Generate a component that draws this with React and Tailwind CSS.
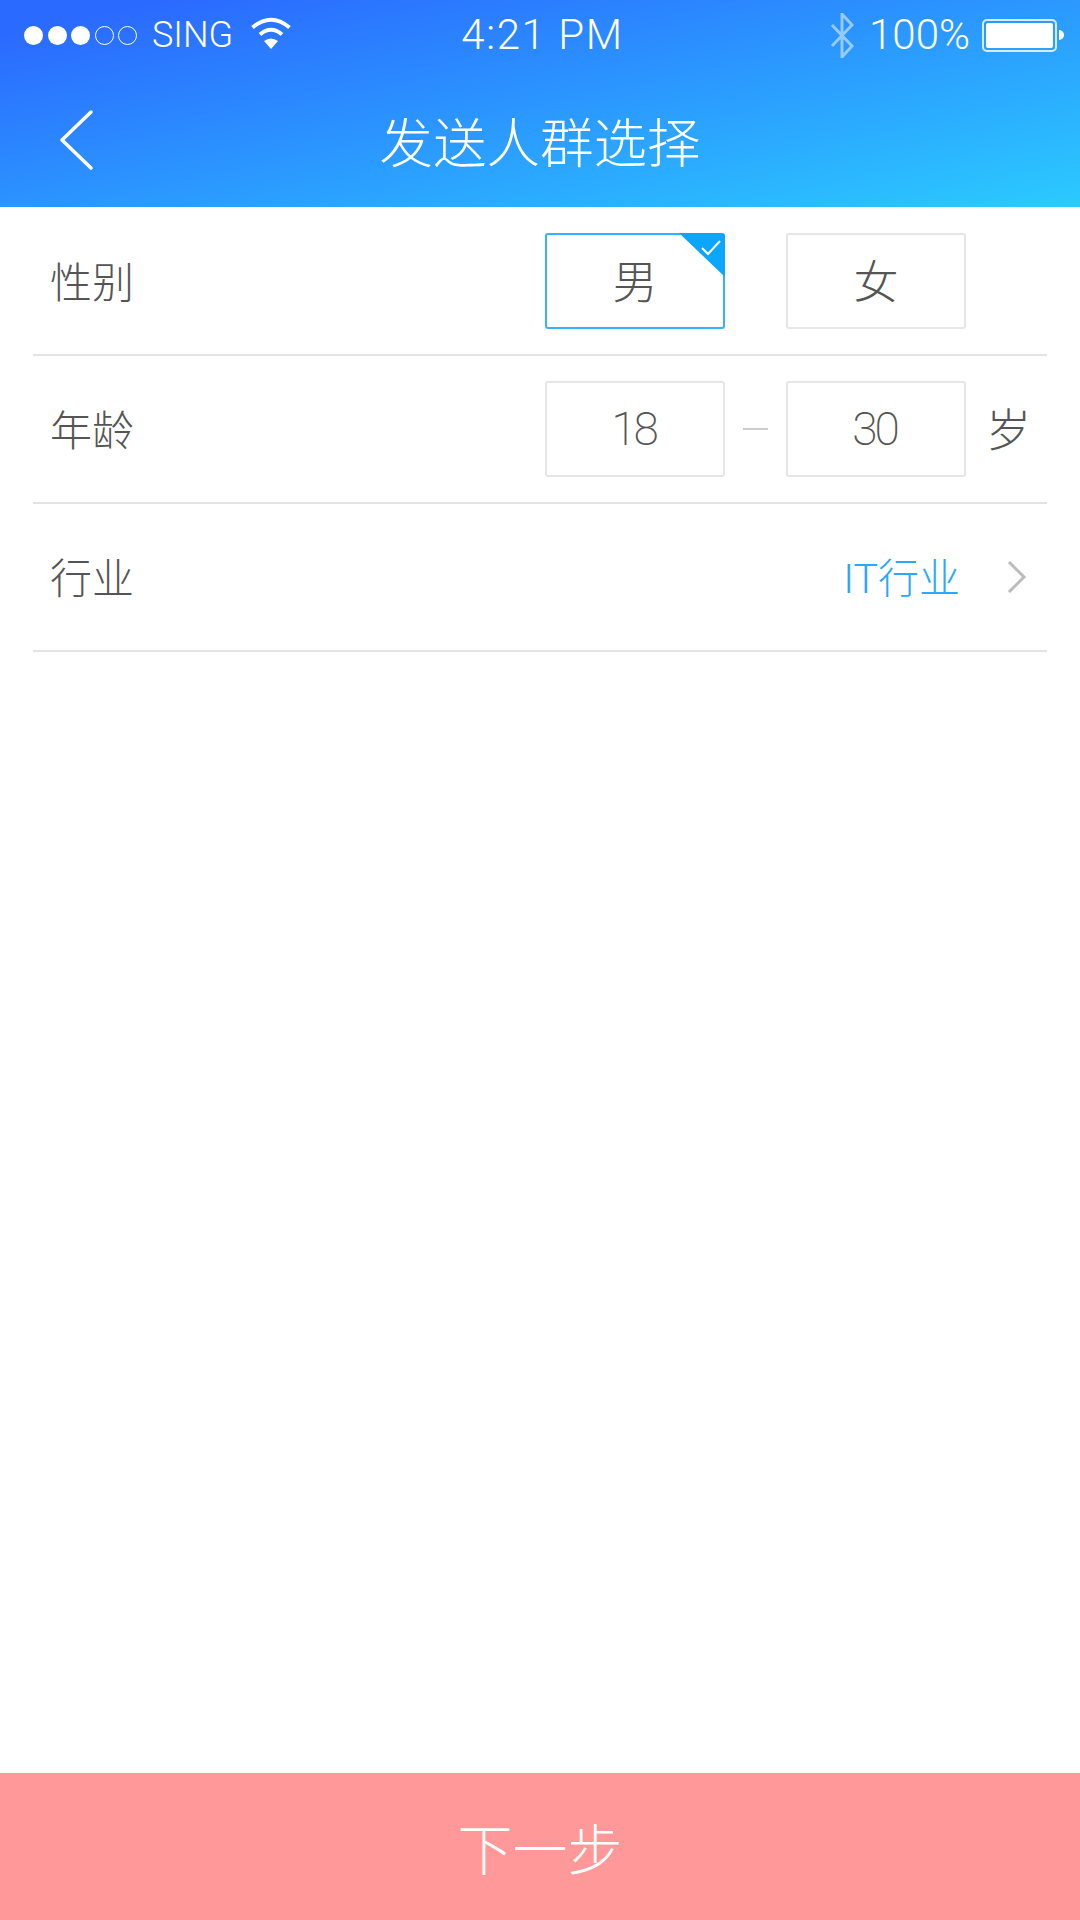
import React from "react";

const cjk = "font-['Noto_Sans_CJK_SC',sans-serif]";
const latin = "font-['Roboto','Noto_Sans_CJK_SC',sans-serif]";

const StatusBar = () => (
  <div className="flex h-[70px] items-center text-white">
    <div className="flex flex-1 items-center pl-[24px]">
      <div className="flex items-center gap-[4.5px]">
        <span className="h-[19px] w-[19px] rounded-full bg-white" />
        <span className="h-[19px] w-[19px] rounded-full bg-white" />
        <span className="h-[19px] w-[19px] rounded-full bg-white" />
        <span className="h-[19px] w-[19px] rounded-full border border-white" />
        <span className="h-[19px] w-[19px] rounded-full border border-white" />
      </div>
      <span className={`${latin} ml-[15px] text-[36px] font-light leading-none`}>SING</span>
      <svg className="mb-[3px] ml-[18px]" width="40" height="33" viewBox="0 0 40 33" fill="none">
        <path d="M1.5 10.5Q20 -5 38.5 10.5" stroke="white" strokeWidth="4" />
        <path d="M9 17.5Q20 8 31 17.5" stroke="white" strokeWidth="4" />
        <path d="M13 24Q20 19 27 24L20 32Z" fill="white" />
      </svg>
    </div>
    <span className={`${latin} pr-[3px] text-[42px] font-light leading-none tracking-[1.6px]`}>4:21 PM</span>
    <div className="flex flex-1 items-center justify-end pr-[16px]">
      <svg className="opacity-50" width="24" height="45" viewBox="0 0 24 45" fill="none">
        <path d="M2 12L22 33L12 44V1L22 12L2 33" stroke="white" strokeWidth="3" />
      </svg>
      <span className={`${latin} ml-[15px] text-[42px] font-light leading-none`}>100%</span>
      <div className="ml-[12px] h-[33px] w-[75px] rounded-[5px] border-2 border-white/80 p-[2px]">
        <div className="h-full w-full rounded-[2px] bg-white" />
      </div>
      <div className="ml-[2px] h-[10px] w-[5px] rounded-r-full bg-white" />
    </div>
  </div>
);

const NavBar = () => (
  <div className="grid h-[137px] grid-cols-[1fr_auto_1fr] items-center pt-[3px] text-white">
    <svg className="ml-[58px]" width="36" height="62" viewBox="0 0 36 62" fill="none">
      <path d="M33 3L4 31L33 59" stroke="white" strokeWidth="3.5" strokeLinecap="round" strokeLinejoin="round" />
    </svg>
    <h1 className={`${cjk} text-[53.5px] font-light leading-none`}>发送人群选择</h1>
    <div />
  </div>
);

const Box = ({ children, selected }) => (
  <div
    className={`relative flex h-[96px] w-[180px] items-center justify-center rounded-[3px] border-2 text-[#555] ${
      selected ? "border-[#36b0ff]" : "border-[#e6e6e6]"
    }`}
  >
    {children}
    {selected && (
      <svg className="absolute -right-[2px] -top-[2px]" width="46" height="44" viewBox="0 0 46 44">
        <path d="M0 0H42Q46 0 46 4V44Z" fill="#0ba6ff" />
        <path d="M23 15L29 21L41 8" fill="none" stroke="white" strokeWidth="2" />
      </svg>
    )}
  </div>
);

const Row = ({ label, children }) => (
  <div className="flex h-[148px] items-center border-b-2 border-[#e3e3e3]">
    <span className={`${cjk} w-[512px] pb-[3px] pl-[17px] text-[42px] font-light leading-none text-[#555]`}>{label}</span>
    {children}
  </div>
);

const App = () => {
  return (
    <div className="flex h-[1920px] w-[1080px] flex-col bg-white">
      <header className="h-[207px] bg-linear-[168deg,#2b6aff_8%,#2bcaff_100%]">
        <StatusBar />
        <NavBar />
      </header>

      <main className="flex-1 px-[33px] pt-[1px]">
        <Row label="性别">
          <Box selected>
            <span className={`${cjk} pb-[3px] text-[45px] font-light leading-none text-[#555]`}>男</span>
          </Box>
          <div className="w-[61px]" />
          <Box>
            <span className={`${cjk} pb-[3px] text-[45px] font-light leading-none text-[#555]`}>女</span>
          </Box>
        </Row>

        <Row label="年龄">
          <Box>
            <span className={`${latin} pr-[3px] text-[46px] font-extralight leading-none tracking-[-3px]`}>18</span>
          </Box>
          <div className="flex w-[61px] justify-center">
            <div className="h-[2px] w-[25px] bg-[#ccc]" />
          </div>
          <Box>
            <span className={`${latin} pr-[3px] text-[46px] font-extralight leading-none tracking-[-3px]`}>30</span>
          </Box>
          <span className={`${cjk} ml-[20px] pb-[3px] text-[45px] font-light leading-none text-[#555]`}>岁</span>
        </Row>

        <Row label="行业">
          <div className="flex flex-1 items-center justify-end pr-[20px]">
            <span className={`${latin} pt-[4px] text-[41px] font-light leading-none text-[#2aa8ff]`}>IT行业</span>
            <svg className="ml-[47px]" width="20" height="34" viewBox="0 0 20 34" fill="none">
              <path d="M2 2L17 17L2 32" stroke="#bbb" strokeWidth="3" />
            </svg>
          </div>
        </Row>
      </main>

      <button className={`${cjk} h-[147px] bg-[#ff9999] text-[55px] font-light leading-none text-white`}>下一步</button>
    </div>
  );
};

export default App;
